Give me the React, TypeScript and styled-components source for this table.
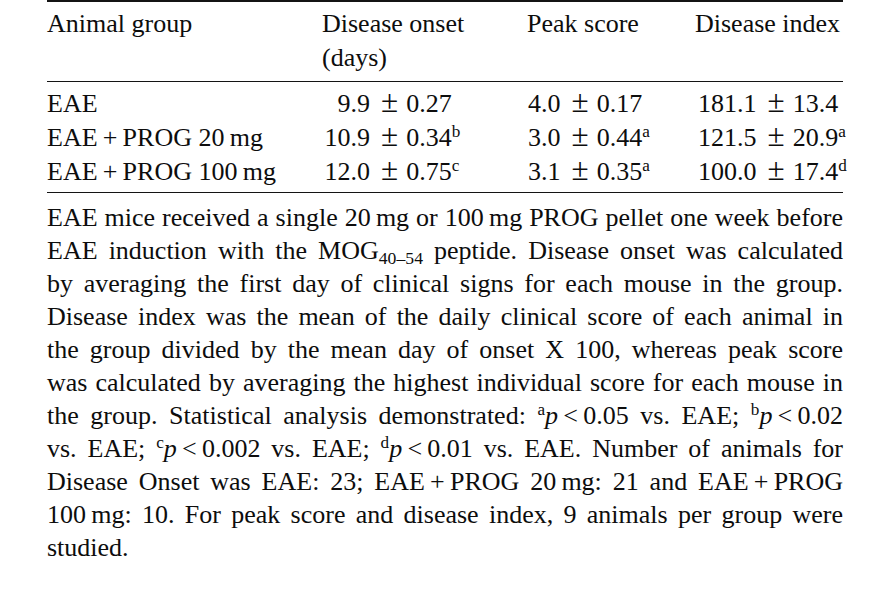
import styled, { createGlobalStyle } from "styled-components";

const Global = createGlobalStyle`
  html, body {
    margin: 0;
    padding: 0;
    background: #ffffff;
  }
  body {
    font-family: "Liberation Serif", "Times New Roman", serif;
    color: #0d0d0d;
  }
`;

const Page = styled.div`
  width: 885px;
  height: 590px;
  padding-left: 47px;
  box-sizing: border-box;
  overflow: hidden;
`;

const Table = styled.div`
  width: 796px;
  font-size: 26px;
  line-height: 34px;
`;

const Head = styled.div`
  display: grid;
  grid-template-columns: 275px 205px 168px 148px;
  border-top: 2px solid #141414;
  border-bottom: 1.5px solid #141414;
  padding: 5px 0 5.5px;
`;

const Body = styled.div`
  display: grid;
  grid-template-columns: 275px 205px 168px 148px;
  border-bottom: 1.5px solid #141414;
  padding: 5px 0 3.5px;
`;

const Cell = styled.div<{ $pad?: number }>`
  padding-left: ${(p) => p.$pad ?? 0}px;
  white-space: nowrap;
`;

const Lead = styled.span<{ $w?: number }>`
  display: inline-block;
  width: ${(p) => (p.$w ? `${p.$w}px` : "auto")};
  text-align: right;
`;

const PlusMinus = styled.span`
  display: inline-block;
  margin: 0 8px 0 11px;
  font-size: 1.2em;
  line-height: 0;
`;

const Sup = styled.sup`
  font-size: 0.66em;
  line-height: 0;
  vertical-align: 0.5em;
`;

const Sub = styled.sub`
  font-size: 0.68em;
  line-height: 0;
  vertical-align: -0.28em;
`;

const Note = styled.div`
  width: 796px;
  margin-top: 8px;
  font-size: 26px;
  line-height: 33px;
`;

const Line = styled.div<{ $last?: boolean }>`
  white-space: nowrap;
  text-align: justify;
  text-align-last: ${(p) => (p.$last ? "left" : "justify")};
`;

const Ital = styled.i`
  font-style: italic;
`;

const T = "\u2009";

interface Val {
  lead: string;
  rest: string;
  mark?: string;
}

interface Row {
  group: string;
  onset: Val;
  peak: Val;
  index: Val;
}

const rows: Row[] = [
  {
    group: "EAE",
    onset: { lead: "9.9", rest: "0.27" },
    peak: { lead: "4.0", rest: "0.17" },
    index: { lead: "181.1", rest: "13.4" },
  },
  {
    group: `EAE${T}+${T}PROG 20${T}mg`,
    onset: { lead: "10.9", rest: "0.34", mark: "b" },
    peak: { lead: "3.0", rest: "0.44", mark: "a" },
    index: { lead: "121.5", rest: "20.9", mark: "a" },
  },
  {
    group: `EAE${T}+${T}PROG 100${T}mg`,
    onset: { lead: "12.0", rest: "0.75", mark: "c" },
    peak: { lead: "3.1", rest: "0.35", mark: "a" },
    index: { lead: "100.0", rest: "17.4", mark: "d" },
  },
];

const Value = ({ v, w }: { v: Val; w?: number }) => (
  <>
    <Lead $w={w}>{v.lead}</Lead>
    <PlusMinus>±</PlusMinus>
    {v.rest}
    {v.mark && <Sup>{v.mark}</Sup>}
  </>
);

const P = ({ mark, rest }: { mark: string; rest: string }) => (
  <>
    <Sup>{mark}</Sup>
    <Ital>p</Ital>
    {`${T}<${T}${rest}`}
  </>
);

export default function App() {
  return (
    <Page>
      <Global />
      <Table>
        <Head>
          <Cell>Animal group</Cell>
          <Cell>
            Disease onset
            <br />
            (days)
          </Cell>
          <Cell>Peak score</Cell>
          <Cell>Disease index</Cell>
        </Head>
        <Body>
          {rows.map((r) => [
            <Cell key={r.group + "-g"}>{r.group}</Cell>,
            <Cell key={r.group + "-o"}>
              <Value v={r.onset} w={48} />
            </Cell>,
            <Cell key={r.group + "-p"} $pad={1}>
              <Value v={r.peak} />
            </Cell>,
            <Cell key={r.group + "-i"} $pad={3}>
              <Value v={r.index} />
            </Cell>,
          ])}
        </Body>
      </Table>
      <Note>
        <Line>{`EAE mice received a single 20${T}mg or 100${T}mg PROG pellet one week before`}</Line>
        <Line>
          EAE induction with the MOG<Sub>40–54</Sub> peptide. Disease onset was calculated
        </Line>
        <Line>by averaging the first day of clinical signs for each mouse in the group.</Line>
        <Line>Disease index was the mean of the daily clinical score of each animal in</Line>
        <Line>the group divided by the mean day of onset X 100, whereas peak score</Line>
        <Line>was calculated by averaging the highest individual score for each mouse in</Line>
        <Line>
          the group. Statistical analysis demonstrated: <P mark="a" rest="0.05" /> vs. EAE;{" "}
          <P mark="b" rest="0.02" />
        </Line>
        <Line>
          vs. EAE; <P mark="c" rest="0.002" /> vs. EAE; <P mark="d" rest="0.01" /> vs. EAE. Number of animals for
        </Line>
        <Line>{`Disease Onset was EAE: 23; EAE${T}+${T}PROG 20${T}mg: 21 and EAE${T}+${T}PROG`}</Line>
        <Line>{`100${T}mg: 10. For peak score and disease index, 9 animals per group were`}</Line>
        <Line $last>studied.</Line>
      </Note>
    </Page>
  );
}
